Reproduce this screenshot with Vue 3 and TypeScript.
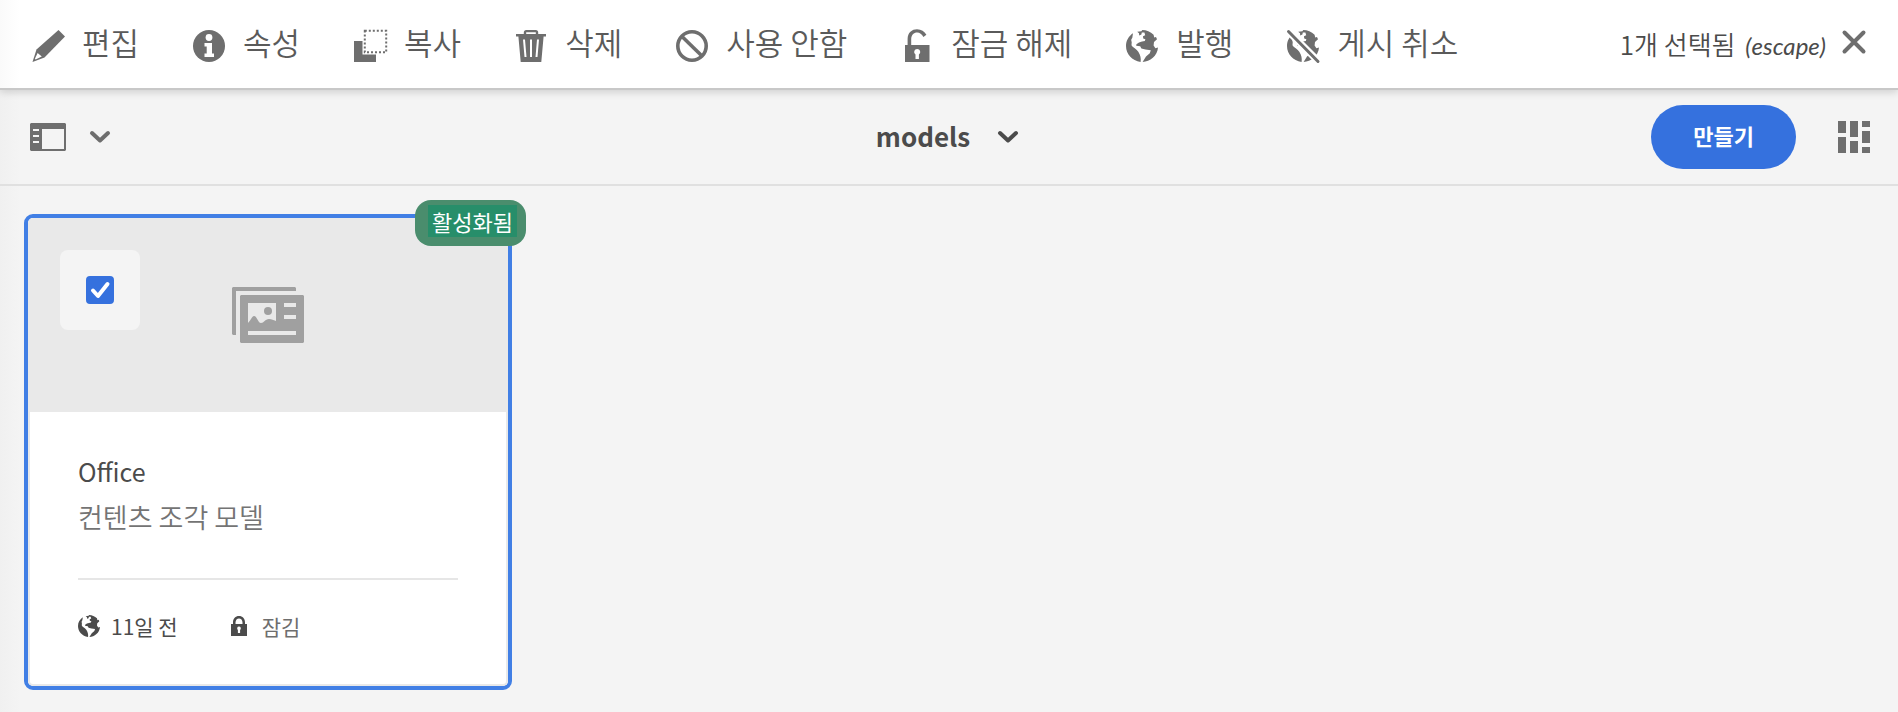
<script setup lang="ts">
import { ref } from 'vue'

interface Action {
  id: string
  label: string
}

const actions: Action[] = [
  { id: 'edit', label: '편집' },
  { id: 'info', label: '속성' },
  { id: 'copy', label: '복사' },
  { id: 'delete', label: '삭제' },
  { id: 'disable', label: '사용 안함' },
  { id: 'unlock', label: '잠금 해제' },
  { id: 'publish', label: '발행' },
  { id: 'unpublish', label: '게시 취소' },
]

const selected = ref(true)

const globeWest = 'M7 3.3C2.800 6 0 10.700 0 16c0 8 6 14.800 14.600 16C15.200 28.500 14.400 25 12.300 21.800 10.500 19.200 7.500 17.800 5.900 16 4.900 14.600 6.300 12.800 5.400 11 4.600 9.200 6.800 8.400 6.500 6.600z'
const globeEast = 'M11.200 1.800 13 3.200 13.200 5.600 15.400 4.600 15.800 2.400 18.400 2.400 19.200 5.200 17 6.200 17.200 8.400 19.400 9.200 18.800 11 16 11.600 13 12.400 10.400 14.200 10.200 15.800 14.200 16.200 15.400 18.600 19.500 19.600 24.800 20.200 23.800 23.200 20 26.600 16.600 32C24 31.900 31.400 26 32 17.600L29.400 18.200 27.600 15.400 28 12 31 9.200 30 7 28.200 7.600 27.600 4.800C24.500 1.800 20.400 .1 16.300 0L15.400 1.200z'
</script>

<template>
  <div class="page">
    <header class="actionbar">
      <nav class="actions" aria-label="작업">
        <button v-for="a in actions" :key="a.id" type="button" class="action">
          <svg class="icon" viewBox="0 0 32 32" aria-hidden="true">
            <g v-if="a.id === 'edit'">
              <path d="M26.500 0 33 6.500 12.500 27.500 .5 32 4.500 19.500z" />
              <path class="cut" d="M5.600 23 9.800 26.600 3.600 29.400 2.900 28.700z" />
            </g>
            <g v-else-if="a.id === 'info'">
              <circle cx="16" cy="16" r="16" />
              <circle class="cut" cx="16" cy="7.500" r="3.400" />
              <path class="cut" d="M11.500 13h7.500v10.500h2V27H11.500v-3.500h2.200v-7h-2.200z" />
            </g>
            <g v-else-if="a.id === 'copy'">
              <path d="M0 11h8.500v13.500H22V32H0z" />
              <path class="dots" d="M10.800.800h21.400v21.400H10.800z" />
            </g>
            <g v-else-if="a.id === 'delete'">
              <path d="M8.800 4V2.500Q8.800 0 11.300 0h9.400q2.500 0 2.500 2.500V4H31v2.600h-2.400L26.300 32H5.700L3.400 6.600H1V4zm2.400 0h9.600V2.300h-9.600z" fill-rule="evenodd" />
              <path class="slit" d="M9 9.500 10.500 27M16 9.500V27M23 9.500 21.500 27" />
            </g>
            <g v-else-if="a.id === 'disable'" class="ring">
              <circle cx="16" cy="16" r="14.200" />
              <path d="M6 6.500 26 26" />
            </g>
            <g v-else-if="a.id === 'unlock'">
              <path d="M4 15h2.600V9C6.600 2.500 11-.8 16-.8c4.400 0 7.400 2.200 9.400 5.600l-3 2.200C20.700 4.200 18.800 2.500 16.200 2.500 12.800 2.500 10.200 5.200 10.200 9v6H28.500v17H4z" />
              <path class="cut" d="M16.200 19a3 3 0 0 1 1.700 5.500V29h-3.400v-4.500A3 3 0 0 1 16.200 19z" />
            </g>
            <g v-else>
              <path :d="globeWest" />
              <path :d="globeEast" />
              <template v-if="a.id === 'unpublish'">
                <path class="slash-gap" d="M-1-1 33 33" />
                <path class="slash" d="M1.500 1.500 31 31.500" />
              </template>
            </g>
          </svg>
          <span>{{ a.label }}</span>
        </button>
      </nav>
      <button type="button" class="deselect">
        <span>1개 선택됨 <em>(escape)</em></span>
        <svg class="close" viewBox="0 0 24 24" aria-hidden="true"><path d="M2.500 2.500 21.500 21.500M21.500 2.500 2.500 21.500" /></svg>
      </button>
    </header>

    <div class="titlebar">
      <button type="button" class="rail" aria-label="사이드 패널">
        <svg class="rail-icon" viewBox="0 0 36 28" aria-hidden="true">
          <path d="M1 0h34l1 1v26l-1 1H1l-1-1V1zM12 6v20h22V6zM3 6v2h6V6zM3 12v2h6v-2zM3 18v2h6v-2z" fill-rule="evenodd" />
        </svg>
        <svg class="chevron" viewBox="0 0 20 12" aria-hidden="true"><path d="M2 2l8 7.500L18 2" /></svg>
      </button>
      <button type="button" class="crumb">
        <span>models</span>
        <svg class="chevron" viewBox="0 0 20 12" aria-hidden="true"><path d="M2 2l8 7.500L18 2" /></svg>
      </button>
      <div class="tools">
        <button type="button" class="create">만들기</button>
        <button type="button" class="view" aria-label="카드 보기">
          <svg class="icon" viewBox="0 0 32 32" aria-hidden="true">
            <path d="M0 0h8v12H0zM12 0h8v16h-8zM24 0h8v6h-8zM0 16h8v16H0zM24 10h8v12h-8zM12 20h8v12h-8zM24 26h8v6h-8z" />
          </svg>
        </button>
      </div>
    </div>

    <main class="content">
      <article class="card">
        <div class="preview">
          <label class="pick">
            <input v-model="selected" type="checkbox" aria-label="Office 선택" />
            <svg v-if="selected" class="tick" viewBox="0 0 28 28" aria-hidden="true"><path d="M7 14.500l5 5.500L21.500 8" /></svg>
          </label>
          <svg class="model" viewBox="0 0 72 56" aria-hidden="true">
            <path d="M1 0h62l1 1v3H4v44H1l-1-1V1z" />
            <path d="M9 8h62l1 1v46l-1 1H9l-1-1V9zM16 16v20c3-3 4-7 6-7 3 0 4 7 7 7 3 0 4-4 8-4 3 0 4 1 7 2V16zM52 16v4h12v-4zM52 28v4h12v-4zM16 44v4h48v-4z" fill-rule="evenodd" />
            <circle cx="36" cy="24" r="4" />
          </svg>
        </div>
        <div class="body">
          <h2>Office</h2>
          <p class="kind">컨텐츠 조각 모델</p>
          <footer class="meta">
            <svg class="globe" viewBox="0 0 32 32" aria-hidden="true">
              <path :d="globeWest" />
              <path :d="globeEast" />
            </svg>
            <span class="when">11일 전</span>
            <svg class="lock" viewBox="0 0 16 20" aria-hidden="true">
              <path d="M0 8h2V6.500C2 2.500 4.500 0 8 0s6 2.500 6 6.500V8h2v12H0zM4.500 8h7V6.500C11.500 4 10 2.400 8 2.400S4.500 4 4.500 6.500zM8 10.500a1.900 1.900 0 0 0-1.100 3.400V17h2.200v-3.100A1.900 1.900 0 0 0 8 10.500z" fill-rule="evenodd" />
            </svg>
            <span class="state">잠김</span>
          </footer>
        </div>
        <span class="badge"><span>활성화됨</span></span>
      </article>
    </main>
  </div>
</template>

<style>
body {
  background: #f4f4f4;
}
</style>

<style scoped>
.page {
  min-height: 100vh;
  background: linear-gradient(90deg, #f0f0f0, #f4f4f4 20px);
  color: #4b4b4b;
  font-family: "Noto Sans CJK KR", "Noto Sans", sans-serif;
}
button {
  display: flex;
  align-items: center;
  padding: 0;
  border: 0;
  background: none;
  color: inherit;
  font: inherit;
  cursor: pointer;
}
svg {
  display: block;
  flex: none;
  overflow: visible;
  fill: currentColor;
}
.icon {
  width: 32px;
  height: 32px;
  color: #6e6e6e;
}
.actionbar {
  position: relative;
  display: flex;
  align-items: center;
  justify-content: space-between;
  height: 88px;
  padding: 0 32px;
  border-bottom: 2px solid #c8c8c8;
  background: linear-gradient(90deg, #fafafa, #fff 20px);
  box-shadow: 0 2px 8px rgba(0, 0, 0, 0.16);
}
.actions {
  display: flex;
  gap: 54px;
}
.action {
  gap: 18px;
  color: #5a5a5a;
  font-size: 31px;
  font-weight: 350;
  line-height: 40px;
  white-space: nowrap;
}
.action .icon {
  margin-top: 4px;
}
.action span {
  padding-bottom: 4px;
}
.cut {
  fill: #fff;
}
.dots {
  fill: none;
  stroke: currentColor;
  stroke-width: 2;
  stroke-dasharray: 2 2;
}
.slit {
  fill: none;
  stroke: #fff;
  stroke-width: 2;
}
.ring {
  fill: none;
  stroke: currentColor;
  stroke-width: 3.6;
}
.slash-gap {
  stroke: #fff;
  stroke-width: 7;
}
.slash {
  stroke: currentColor;
  stroke-width: 3;
  stroke-linecap: round;
}
.deselect {
  gap: 16px;
  padding-bottom: 4px;
  font-size: 26px;
  font-weight: 350;
  line-height: 32px;
  white-space: nowrap;
}
.deselect span {
  padding-top: 5px;
}
.deselect em {
  margin-left: 4px;
  font-family: Lato, "Noto Sans", sans-serif;
  font-size: 24px;
  font-weight: 400;
}
.close {
  width: 24px;
  height: 24px;
  color: #6e6e6e;
}
.close path,
.chevron path {
  fill: none;
  stroke: currentColor;
  stroke-width: 4;
  stroke-linecap: round;
  stroke-linejoin: round;
}
.titlebar {
  display: grid;
  grid-template-columns: 1fr auto 1fr;
  align-items: center;
  height: 94px;
  padding: 0 28px 0 30px;
  border-bottom: 2px solid #e0e0e0;
}
.rail {
  justify-self: start;
  gap: 24px;
  color: #6e6e6e;
}
.rail-icon {
  width: 36px;
  height: 28px;
}
.chevron {
  width: 20px;
  height: 12px;
}
.crumb {
  gap: 28px;
  padding-right: 6px;
  font-size: 26px;
  font-weight: 700;
  line-height: 40px;
}
.crumb span {
  padding-bottom: 2px;
}
.tools {
  display: flex;
  align-items: center;
  justify-self: end;
  gap: 42px;
}
.create {
  height: 64px;
  padding: 0 42px 4px;
  border-radius: 32px;
  background: #3571de;
  color: #fff;
  font-size: 22px;
  font-weight: 700;
}
.content {
  padding: 28px 24px 0;
}
.card {
  position: relative;
  box-sizing: border-box;
  max-width: 488px;
  border: 4px solid #417fe5;
  border-radius: 9px;
  background: #fff;
}
.preview {
  display: flex;
  align-items: flex-start;
  padding: 32px;
  gap: 92px;
  border-radius: 5px 5px 0 0;
  background: #e9e9e9;
  height: 130px;
}
.pick {
  display: grid;
  place-content: center;
  width: 80px;
  height: 80px;
  border-radius: 8px;
  background: #f4f4f4;
}
.pick input,
.tick {
  grid-area: 1 / 1;
  width: 28px;
  height: 28px;
  margin: 0;
}
.pick input {
  appearance: none;
  border: 2px solid #6e6e6e;
  border-radius: 4px;
}
.pick input:checked {
  border-color: #3571de;
  background: #3571de;
}
.tick {
  pointer-events: none;
}
.tick path {
  fill: none;
  stroke: #fff;
  stroke-width: 4;
  stroke-linecap: round;
  stroke-linejoin: round;
}
.model {
  align-self: center;
  width: 72px;
  height: 56px;
  color: #a0a0a0;
}
.body {
  padding: 35px 48px 42px;
  border: 2px solid #e9e9e9;
  border-top: 0;
  border-radius: 0 0 5px 5px;
}
h2 {
  margin: 0;
  font-size: 25px;
  font-weight: 400;
  line-height: 48px;
}
.kind {
  margin: 0;
  color: #747474;
  font-size: 27px;
  font-weight: 350;
  line-height: 44px;
}
.meta {
  display: flex;
  align-items: center;
  margin-top: 39px;
  padding-top: 30px;
  border-top: 2px solid #e6e6e6;
  font-size: 21px;
  line-height: 32px;
}
.globe {
  width: 22px;
  height: 22px;
}
.when {
  margin: 0 53px 0 11px;
}
.lock {
  width: 16px;
  height: 20px;
}
.state {
  margin-left: 15px;
  color: #6e6e6e;
}
.badge {
  position: absolute;
  top: -18px;
  right: -18px;
  padding: 5px 9px 9px 13px;
  border-radius: 16px;
  background: #4a8d6d;
  color: #fff;
  font-size: 22px;
  line-height: 32px;
}
.badge span {
  display: block;
  padding: 0 4px;
  background: #278e6a;
}
</style>
